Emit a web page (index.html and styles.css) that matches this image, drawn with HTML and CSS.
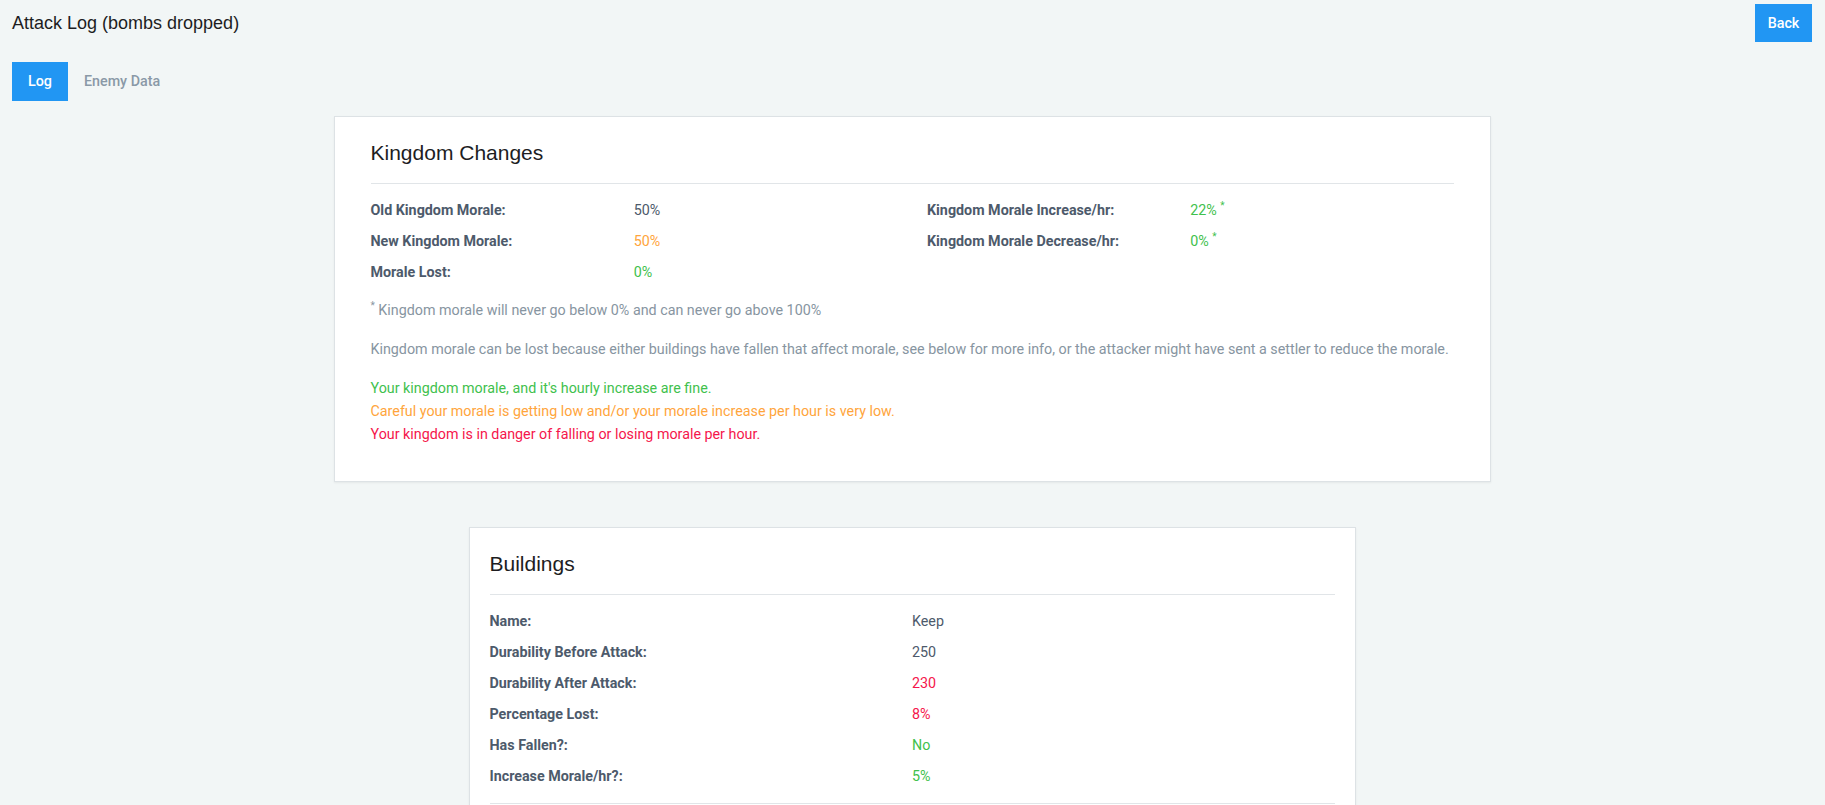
FILE: index.html
```html
<!DOCTYPE html>
<html lang="en">
<head>
<meta charset="utf-8">
<title>Attack Log</title>
<link rel="stylesheet" href="styles.css">
</head>
<body>
<div class="page">
  <header class="topbar">
    <h1 class="page-title">Attack Log (bombs dropped)</h1>
    <button class="btn">Back</button>
  </header>

  <nav class="tabs">
    <a class="tab active">Log</a>
    <a class="tab">Enemy Data</a>
  </nav>

  <section class="card card-wide">
    <h2 class="card-title">Kingdom Changes</h2>
    <hr class="divider">
    <div class="cols">
      <dl class="pairs">
        <dt>Old Kingdom Morale:</dt><dd>50%</dd>
        <dt>New Kingdom Morale:</dt><dd class="orange">50%</dd>
        <dt>Morale Lost:</dt><dd class="green">0%</dd>
      </dl>
      <dl class="pairs">
        <dt>Kingdom Morale Increase/hr:</dt><dd class="green">22% <sup>*</sup></dd>
        <dt>Kingdom Morale Decrease/hr:</dt><dd class="green">0% <sup>*</sup></dd>
      </dl>
    </div>
    <p class="note"><sup>*</sup> Kingdom morale will never go below 0% and can never go above 100%</p>
    <p class="muted">Kingdom morale can be lost because either buildings have fallen that affect morale, see below for more info, or the attacker might have sent a settler to reduce the morale.</p>
    <div class="legend">
      <p class="green">Your kingdom morale, and it's hourly increase are fine.</p>
      <p class="orange">Careful your morale is getting low and/or your morale increase per hour is very low.</p>
      <p class="red">Your kingdom is in danger of falling or losing morale per hour.</p>
    </div>
  </section>

  <section class="card card-narrow">
    <h2 class="card-title">Buildings</h2>
    <hr class="divider">
    <dl class="pairs">
      <dt>Name:</dt><dd>Keep</dd>
      <dt>Durability Before Attack:</dt><dd>250</dd>
      <dt>Durability After Attack:</dt><dd class="red">230</dd>
      <dt>Percentage Lost:</dt><dd class="red">8%</dd>
      <dt>Has Fallen?:</dt><dd class="green">No</dd>
      <dt>Increase Morale/hr?:</dt><dd class="green">5%</dd>
    </dl>
    <hr class="divider divider-bottom">
  </section>
</div>
</body>
</html>
```

FILE: styles.css
```css
* { box-sizing: border-box; }

html, body {
  margin: 0;
  padding: 0;
}

body {
  background: #f2f6f6;
  font-family: Roboto, "Liberation Sans", sans-serif;
  font-size: 14.3px;
  color: #4d5a6b;
}

.page {
  padding: 4px 13px 0 12px;
}

.topbar {
  display: flex;
  justify-content: space-between;
  align-items: center;
  height: 38px;
}

.page-title {
  margin: 0;
  font-family: "Liberation Sans", Arial, sans-serif;
  font-weight: 400;
  font-size: 18px;
  color: #1d1d1f;
}

.btn {
  border: 0;
  background: #2196f3;
  color: #fff;
  font-family: Roboto, sans-serif;
  font-weight: 500;
  font-size: 14.3px;
  height: 38px;
  width: 57px;
  padding: 0;
}

.tabs {
  display: flex;
  margin-top: 20px;
}

.tab {
  height: 39px;
  line-height: 39px;
  padding: 0 16px;
  font-size: 14.3px;
  font-weight: 500;
  color: #8a99a7;
}

.tab.active {
  background: #2196f3;
  color: #fff;
}

.card {
  background: #fff;
  border: 1px solid #dde2e5;
  box-shadow: 0 1px 2px rgba(0, 0, 0, 0.06);
  margin-left: auto;
  margin-right: auto;
}

.card-wide {
  width: 1157px;
  margin-top: 15px;
  padding: 23px 36px 35px;
}

.card-narrow {
  width: 887px;
  margin-top: 45px;
  padding: 23px 20px 40px;
}

.card-title {
  margin: 0;
  font-family: "Liberation Sans", Arial, sans-serif;
  font-weight: 400;
  font-size: 21px;
  line-height: 25px;
  color: #1d1d1f;
}

.divider {
  border: 0;
  border-top: 1px solid #e1e5e8;
  margin: 18px 0 11px;
}

.divider-bottom {
  margin: 11px 0 0;
}

.cols {
  display: grid;
  grid-template-columns: 1fr 1fr;
  column-gap: 30px;
  align-items: start;
}

.pairs {
  display: grid;
  grid-template-columns: 1fr 1fr;
  align-content: start;
  margin: 0;
  line-height: 31px;
}

.pairs dt {
  font-weight: 700;
  color: #4d5a6b;
}

.pairs dd {
  margin: 0;
  color: #4d5a6b;
}

sup {
  font-size: 10px;
  line-height: 0;
  vertical-align: 6px;
}

.note {
  margin: 11px 0 0;
  line-height: 23px;
  color: #8795a1;
}

.muted {
  margin: 16px 0 0;
  line-height: 23px;
  color: #8795a1;
}

.legend {
  margin-top: 16px;
}

.legend p {
  margin: 0;
  line-height: 23px;
}

.pairs dd.green, .green { color: #3fc14d; }
.pairs dd.orange, .orange { color: #ffa53c; }
.pairs dd.red, .red { color: #f5164b; }
```
